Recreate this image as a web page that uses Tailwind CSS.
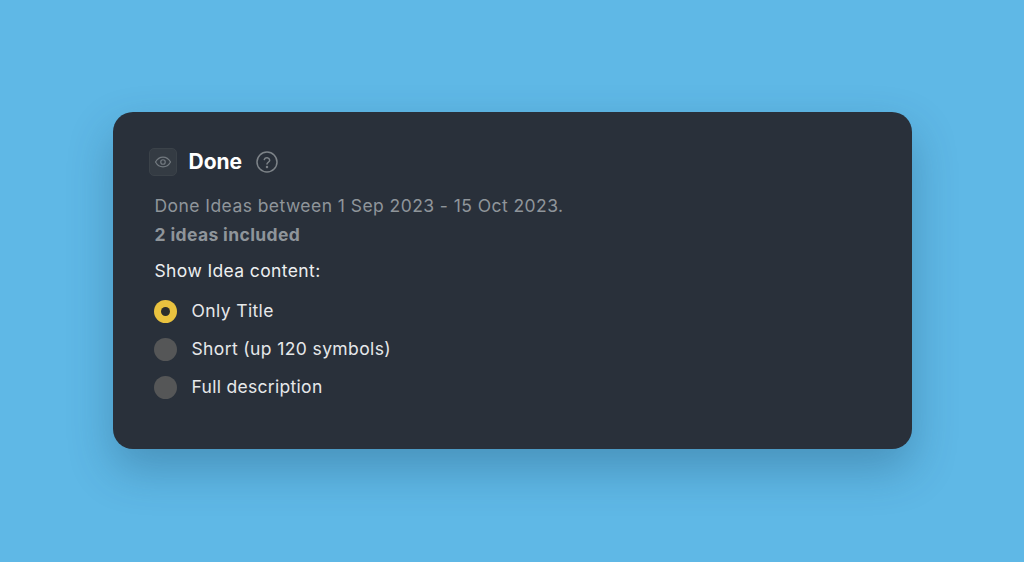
<!DOCTYPE html>
<html>
<head>
<meta charset="utf-8">
<script src="https://cdn.jsdelivr.net/npm/@tailwindcss/browser@4"></script>
</head>
<body class="m-0">
<div class="w-[1024px] h-[562px] bg-[#5fb8e6] flex items-start justify-center pt-[112px] overflow-hidden font-['Inter',sans-serif]">
  <div class="w-[799px] h-[337px] rounded-[20px] bg-[#29303a] shadow-[0_20px_45px_rgba(20,60,90,0.3)] pl-[36px] pt-[36px] flex flex-col">
    <div class="flex items-center h-[28px]">
      <div class="w-[28px] h-[28px] rounded-[5px] bg-[#343b43] border border-[#3b4249] flex items-center justify-center">
        <svg width="18" height="18" viewBox="0 0 24 24" fill="none" stroke="#737a80" stroke-width="1.6" stroke-linecap="round" stroke-linejoin="round"><path d="M2 12s3.600-6.500 10-6.500S22 12 22 12s-3.600 6.500-10 6.500S2 12 2 12z"/><circle cx="12" cy="12" r="3"/></svg>
      </div>
      <span class="ml-[12px] text-[21px] leading-[28px] font-bold text-white">Done</span>
      <svg class="ml-[14px]" width="22" height="22" viewBox="0 0 22 22" fill="none" stroke="#7d8388" stroke-width="1.5" stroke-linecap="round"><circle cx="11" cy="11" r="10"/><path d="M8.300 8.600a2.800 2.800 0 0 1 5.400.6c0 1.800-2.700 2.300-2.700 3.900"/><circle cx="11" cy="16" r=".5" fill="#7d8388"/></svg>
    </div>
    <div class="pl-[6px] flex flex-col">
      <p class="mt-[17px] text-[17.5px] leading-[26px] text-[#8f959a] tracking-[0.44px]">Done Ideas between 1 Sep 2023 - 15 Oct 2023.</p>
      <p class="mt-[3px] text-[17.5px] leading-[26px] font-bold text-[#8f959a] tracking-[0.37px]">2 ideas included</p>
      <p class="mt-[11px] text-[17.5px] leading-[24px] text-[#eceef0] tracking-[0.38px]">Show Idea content:</p>
      <div class="mt-[16px] flex flex-col gap-[14px] -ml-[1px]">
        <div class="flex items-center h-[24px]">
          <span class="w-[23px] h-[23px] rounded-full bg-[#e9c23f] flex items-center justify-center"><span class="w-[9px] h-[9px] rounded-full bg-[#2b2d2c]"></span></span>
          <span class="ml-[15px] text-[17.5px] text-[#e6e8ea] tracking-[0.38px]">Only Title</span>
        </div>
        <div class="flex items-center h-[24px]">
          <span class="w-[23px] h-[23px] rounded-full bg-[#555657]"></span>
          <span class="ml-[15px] text-[17.5px] text-[#e6e8ea] tracking-[0.38px]">Short (up 120 symbols)</span>
        </div>
        <div class="flex items-center h-[24px]">
          <span class="w-[23px] h-[23px] rounded-full bg-[#555657]"></span>
          <span class="ml-[15px] text-[17.5px] text-[#e6e8ea] tracking-[0.3px]">Full description</span>
        </div>
      </div>
    </div>
  </div>
</div>
</body>
</html>
